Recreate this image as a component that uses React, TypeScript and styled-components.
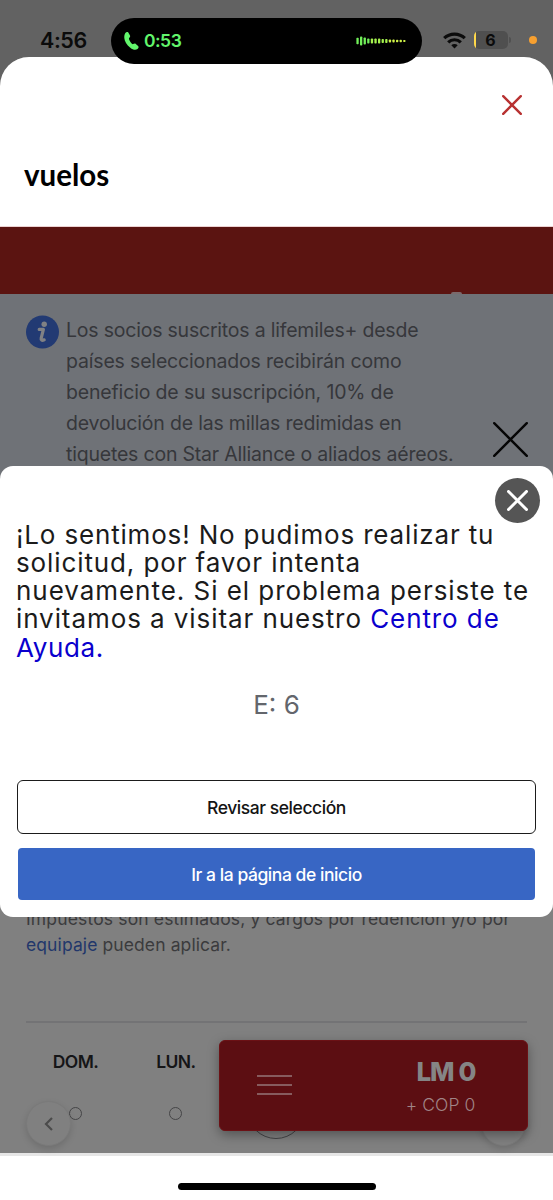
import React from "react";
import styled, { createGlobalStyle } from "styled-components";

const GlobalStyle = createGlobalStyle`
  *, *::before, *::after { box-sizing: border-box; }
  body { margin: 0; background: #fff; font-family: Inter, "Liberation Sans", sans-serif; }
  h1, p { margin: 0; }
  button { font: inherit; padding: 0; border: 0; background: none; }
`;

const Phone = styled.div`
  position: relative;
  width: 553px;
  height: 1200px;
  overflow: hidden;
  display: flex;
  flex-direction: column;
  background: #626262;
`;

const StatusBar = styled.header`
  flex: none;
  height: 57px;
  padding: 23px 16px 0 40px;
  display: flex;
  justify-content: space-between;
  align-items: flex-start;
  color: #0b0b0b;
`;

const Clock = styled.span`
  font-size: 21.5px;
  line-height: 34px;
  font-weight: 600;
  letter-spacing: -0.4px;
`;

const StatusIcons = styled.div`
  display: flex;
  align-items: center;
  height: 34px;
`;

const Battery = styled.div`
  width: 34px;
  height: 18px;
  margin-left: 8px;
  border-radius: 5px;
  background: linear-gradient(to right, #ffd84a 0 2.5px, #4f4f4f 2.5px);
  text-align: center;
  font-size: 16px;
  line-height: 18px;
  font-weight: 700;
`;

const BatteryCap = styled.i`
  width: 2px;
  height: 6px;
  margin-left: 1px;
  border-radius: 0 2px 2px 0;
  background: #505050;
`;

const MicDot = styled.i`
  width: 8px;
  height: 8px;
  margin-left: 18.5px;
  border-radius: 50%;
  background: #f7a030;
`;

const Island = styled.div`
  position: absolute;
  z-index: 3;
  left: 111px;
  top: 17.5px;
  width: 311px;
  height: 46px;
  padding: 0 16px 0 13px;
  border-radius: 23px;
  background: #000;
  color: #62f56c;
  display: flex;
  align-items: center;
`;

const CallTime = styled.span`
  margin-left: 5px;
  flex: 1;
  font-size: 17.5px;
  font-weight: 600;
  letter-spacing: -0.5px;
`;

const Sheet = styled.main`
  flex: 1;
  min-height: 0;
  display: flex;
  flex-direction: column;
  overflow: hidden;
  border-radius: 29px 29px 0 0;
  background: #808080;
`;

const SheetHeader = styled.div`
  flex: none;
  height: 170px;
  padding: 38px 31px 0 24px;
  border-bottom: 1px solid #ecd2d2;
  background: #fff;
`;

const CloseRow = styled.div`
  display: flex;
  justify-content: flex-end;
  height: 64.5px;
`;

const Title = styled.h1`
  font-family: Lato, sans-serif;
  font-size: 29.5px;
  line-height: 30px;
  font-weight: 700;
  color: #000;
`;

const RedBanner = styled.div`
  flex: none;
  height: 66.5px;
  padding-right: 91px;
  display: flex;
  justify-content: flex-end;
  align-items: flex-end;
  background: #5b1411;
`;

const BannerKnob = styled.i`
  width: 11px;
  height: 1.5px;
  border-radius: 6px 6px 0 0;
  background: #7b6a6c;
`;

const Notice = styled.section`
  flex: none;
  height: 300px;
  padding: 21.5px 24px 0 26px;
  display: flex;
  gap: 7px;
  background: #6f7277;
`;

const NoticeText = styled.p`
  flex: 1;
  font-size: 19.5px;
  line-height: 31px;
  color: #36373b;
`;

const Line = styled.span<{ $track?: number }>`
  display: block;
  white-space: nowrap;
  letter-spacing: ${({ $track = 0 }) => $track}px;
`;

const NoticeClose = styled.div`
  position: absolute;
  left: 493px;
  top: 421.5px;
`;

const Fares = styled.section`
  flex: 1;
  min-height: 0;
  padding: 312px 26px 0;
  display: flex;
  flex-direction: column;
`;

const FareNote = styled.p`
  font-size: 17.5px;
  line-height: 26px;
  color: #3b3b3d;
`;

const NoteLink = styled.a`
  color: #22376b;
`;

const Divider = styled.hr`
  flex: none;
  width: 100%;
  height: 2px;
  margin: 63.5px 0 0;
  border: 0;
  background: #737375;
`;

const Days = styled.div`
  display: flex;
  margin-left: -0.7px;
  padding-top: 27px;
`;

const Day = styled.div`
  flex: none;
  width: 100.4px;
  display: flex;
  flex-direction: column;
  align-items: center;
`;

const DayName = styled.span`
  height: 24px;
  font-size: 17.5px;
  line-height: 24px;
  font-weight: 600;
  letter-spacing: -0.6px;
  color: #151517;
`;

const DayDot = styled.i<{ $size: number; $top: number }>`
  width: ${({ $size }) => $size}px;
  height: ${({ $size }) => $size}px;
  margin-top: ${({ $top }) => $top}px;
  border: 1.4px solid #454547;
  border-radius: 50%;
`;

const ArrowButton = styled.button<{ $left: number }>`
  position: absolute;
  left: ${({ $left }) => $left}px;
  top: 1101px;
  width: 45px;
  height: 45px;
  display: flex;
  align-items: center;
  justify-content: center;
  border: 1px solid #7a7a7a;
  border-radius: 50%;
  background: #808080;
  box-shadow: 0 3px 7px rgba(0, 0, 0, 0.14);
`;

const Cart = styled.div`
  position: absolute;
  left: 218.5px;
  top: 1040px;
  width: 309px;
  height: 90.5px;
  padding: 3px 51px 0 37.5px;
  display: flex;
  justify-content: space-between;
  align-items: center;
  border: 1px solid #6b1115;
  border-radius: 6px;
  background: #5c0e12;
  box-shadow: 0 4px 12px rgba(0, 0, 0, 0.35);
`;

const MenuIcon = styled.svg`
  margin-top: -3px;
`;

const Totals = styled.div`
  display: flex;
  flex-direction: column;
  align-items: flex-end;
  padding-top: 3px;
`;

const Miles = styled.strong`
  font-size: 26px;
  line-height: 34px;
  font-weight: 800;
  letter-spacing: -1.1px;
  word-spacing: 0.5px;
  color: #858585;
`;

const Cash = styled.span`
  font-size: 17.5px;
  line-height: 32px;
  font-weight: 300;
  letter-spacing: 0.1px;
  color: #a08486;
`;

const BottomBar = styled.footer`
  flex: none;
  height: 47px;
  padding-top: 27px;
  display: flex;
  justify-content: center;
  align-items: flex-start;
  border-top: 3px solid #e6e6e6;
  background: #fff;
`;

const HomeIndicator = styled.i`
  width: 198px;
  height: 7px;
  border-radius: 4px;
  background: #000;
`;

const Dialog = styled.section`
  position: absolute;
  z-index: 2;
  left: 0;
  top: 465.5px;
  width: 553px;
  height: 451.5px;
  padding: 55px 17px 17px;
  display: flex;
  flex-direction: column;
  border-radius: 13px;
  background: #fff;
`;

const DialogClose = styled.button`
  position: absolute;
  right: 13px;
  top: 12.5px;
  width: 45px;
  height: 45px;
  display: flex;
  align-items: center;
  justify-content: center;
  border-radius: 50%;
  background: #555;
`;

const Message = styled.p`
  margin-left: -1px;
  font-size: 26px;
  line-height: 28.3px;
  color: #1b1b1b;
`;

const HelpLink = styled.a`
  color: #0a00cd;
`;

const ErrorCode = styled.p`
  margin-top: 26.5px;
  height: 34px;
  font-size: 26px;
  line-height: 34px;
  text-align: center;
  color: #63666c;
`;

const Actions = styled.div`
  margin-top: auto;
  display: flex;
  flex-direction: column;
  gap: 14px;
`;

const Action = styled.button<{ $primary?: boolean }>`
  height: ${({ $primary }) => ($primary ? 52 : 54)}px;
  margin: 0 ${({ $primary }) => ($primary ? 1 : 0)}px;
  border: ${({ $primary }) => ($primary ? "0" : "1.4px solid #1b1b1b")};
  border-radius: ${({ $primary }) => ($primary ? 4 : 6)}px;
  background: ${({ $primary }) => ($primary ? "#3866c4" : "#fff")};
  color: ${({ $primary }) => ($primary ? "#fff" : "#141414")};
  font-size: 17.5px;
  font-weight: 500;
  letter-spacing: -0.45px;
`;

function Cross({ size, width, color }: { size: number; width: number; color: string }) {
  const near = width / 2;
  const far = size - near;
  return (
    <svg width={size} height={size} viewBox={`0 0 ${size} ${size}`} fill="none">
      <path
        d={`M${near} ${near}L${far} ${far}M${far} ${near}L${near} ${far}`}
        stroke={color}
        strokeWidth={width}
        strokeLinecap="round"
      />
    </svg>
  );
}

function PhoneIcon() {
  return (
    <svg width="15" height="20" viewBox="0 0 15 20" fill="#62f56c">
      <path d="M1.2 2.2C2 1 3.4.6 4.3 1.4L6 4.5c.5 1-.1 1.7-.9 2.5-.5.6.2 2.2 1.2 3.8 1.1 1.6 2.1 2.6 2.8 2.3 1-.5 1.8-.9 2.7-.2l2.3 2c.9.9.5 2.1-.6 3-1.7 1.4-4.5 1-7.2-1.2C2.6 13.8.6 10.3.3 6.9.2 5 .5 3.2 1.2 2.2Z" />
    </svg>
  );
}

const WAVE = [6.5, 9, 7, 5, 5, 5, 5, 4, 4, 3, 3, 2.5, 2.5, 2.2];

function WaveIcon() {
  return (
    <svg width="50" height="10" viewBox="0 0 50 10">
      {WAVE.map((h, i) => (
        <rect
          key={i}
          x={0.4 + i * 3.6}
          y={5 - h / 2}
          width="2.3"
          height={h}
          rx="0.8"
          fill={i < 4 ? "#72f05a" : i < 9 ? "#a5f24e" : "#d0f248"}
        />
      ))}
    </svg>
  );
}

function WifiIcon() {
  return (
    <svg width="23" height="17" viewBox="0 0 23 17" fill="none" stroke="#0b0b0b" strokeWidth="3.2">
      <path d="M1.2 6.2a14.8 14.8 0 0 1 20.6 0" />
      <path d="M5.2 10.3a9 9 0 0 1 12.6 0" />
      <path d="M11.5 16.5 8.3 13.2a4.6 4.6 0 0 1 6.4 0Z" fill="#0b0b0b" stroke="none" />
    </svg>
  );
}

function InfoIcon() {
  return (
    <svg width="33" height="34" viewBox="0 0 33 34">
      <circle cx="16.5" cy="17" r="16.5" fill="#223a73" />
      <circle cx="18.2" cy="9.2" r="2.7" fill="#808184" />
      <path
        d="M13.2 14.4h4.2l-2.2 8.8c-.5 2 .8 2.6 3 1.6"
        fill="none"
        stroke="#808184"
        strokeWidth="3.2"
        strokeLinecap="round"
        strokeLinejoin="round"
      />
    </svg>
  );
}

export default function App() {
  return (
    <Phone>
      <GlobalStyle />
      <StatusBar>
        <Clock>4:56</Clock>
        <StatusIcons>
          <WifiIcon />
          <Battery>6</Battery>
          <BatteryCap />
          <MicDot />
        </StatusIcons>
      </StatusBar>
      <Island>
        <PhoneIcon />
        <CallTime>0:53</CallTime>
        <WaveIcon />
      </Island>

      <Sheet>
        <SheetHeader>
          <CloseRow>
            <Cross size={20} width={2.4} color="#b83232" />
          </CloseRow>
          <Title>vuelos</Title>
        </SheetHeader>
        <RedBanner>
          <BannerKnob />
        </RedBanner>
        <Notice>
          <InfoIcon />
          <NoticeText>
            <Line $track={-0.21}>Los socios suscritos a lifemiles+ desde</Line>
            <Line $track={-0.17}>países seleccionados recibirán como</Line>
            <Line $track={-0.16}>beneficio de su suscripción, 10% de</Line>
            <Line $track={-0.19}>devolución de las millas redimidas en</Line>
            <Line $track={-0.2}>tiquetes con Star Alliance o aliados aéreos.</Line>
          </NoticeText>
        </Notice>
        <Fares>
          <FareNote>
            <Line $track={0.15}>Impuestos son estimados, y cargos por redención y/o por</Line>
            <Line $track={0.1}>
              <NoteLink>equipaje</NoteLink> pueden aplicar.
            </Line>
          </FareNote>
          <Divider />
          <Days>
            <Day>
              <DayName>DOM.</DayName>
              <DayDot $size={13} $top={32.5} />
            </Day>
            <Day>
              <DayName>LUN.</DayName>
              <DayDot $size={13} $top={32.5} />
            </Day>
            <Day>
              <DayName />
              <DayDot $size={58} $top={6.5} />
            </Day>
          </Days>
        </Fares>
      </Sheet>
      <BottomBar>
        <HomeIndicator />
      </BottomBar>

      <NoticeClose>
        <Cross size={35} width={2.4} color="#050505" />
      </NoticeClose>
      <ArrowButton $left={26}>
        <svg width="9" height="14" viewBox="0 0 9 14" fill="none" stroke="#4b4b4b" strokeWidth="2.2">
          <path d="M8 1 2 7l6 6" />
        </svg>
      </ArrowButton>
      <ArrowButton $left={481} />
      <Cart>
        <MenuIcon width="35" height="20" viewBox="0 0 35 20" stroke="#957678" strokeWidth="1.5">
          <path d="M0 1h35M0 10h35M0 19h35" />
        </MenuIcon>
        <Totals>
          <Miles>LM 0</Miles>
          <Cash>+ COP 0</Cash>
        </Totals>
      </Cart>

      <Dialog>
        <DialogClose>
          <Cross size={21} width={3} color="#fff" />
        </DialogClose>
        <Message>
          <Line $track={0.83}>¡Lo sentimos! No pudimos realizar tu</Line>
          <Line $track={0.89}>solicitud, por favor intenta</Line>
          <Line $track={0.96}>nuevamente. Si el problema persiste te</Line>
          <Line $track={0.92}>
            invitamos a visitar nuestro <HelpLink>Centro de</HelpLink>
          </Line>
          <Line $track={0.6}>
            <HelpLink>Ayuda.</HelpLink>
          </Line>
        </Message>
        <ErrorCode>E: 6</ErrorCode>
        <Actions>
          <Action>Revisar selección</Action>
          <Action $primary>Ir a la página de inicio</Action>
        </Actions>
      </Dialog>
    </Phone>
  );
}
